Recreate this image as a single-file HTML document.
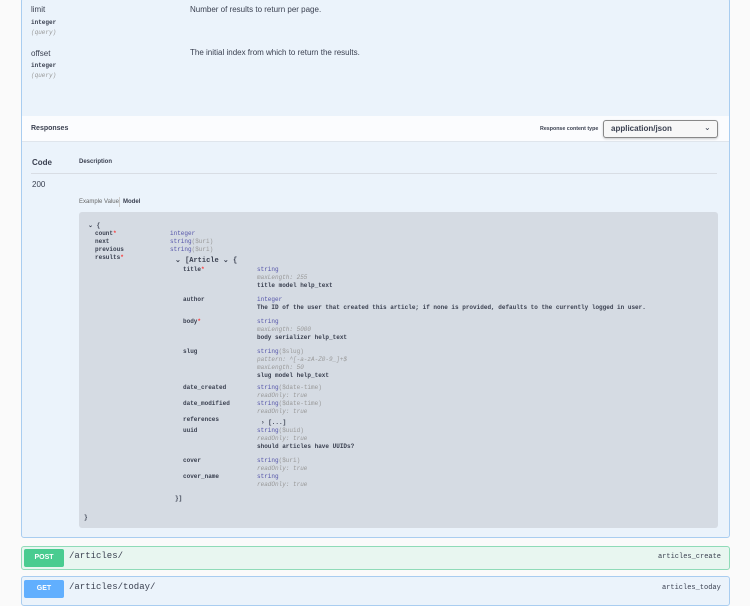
<!DOCTYPE html>
<html><head><meta charset="utf-8"><style>
*{margin:0;padding:0;box-sizing:border-box}
body{width:750px;height:600px;background:#fafafa;position:relative;overflow:hidden;font-family:"Liberation Sans",sans-serif;color:#3b4151}
.a{position:absolute;white-space:nowrap}
.m{font-family:"Liberation Mono",monospace;font-size:6px;line-height:8px;font-weight:bold;color:#3b4151}
.t{color:#55a;font-weight:normal}
.g{color:#999;font-style:italic;font-weight:normal}
.r{color:#f93e3e}
</style></head><body>
<div class="a" style="left:21px;top:-2px;width:709px;height:540px;background:#ebf3fb;border:1px solid #a9cdf0;border-radius:3px"></div>
<div class="a" style="left:31px;top:5px;font-size:8px">limit</div>
<div class="a m" style="left:31px;top:19px">integer</div>
<div class="a m g" style="left:31px;top:29px">(query)</div>
<div class="a" style="left:31px;top:49px;font-size:8px">offset</div>
<div class="a m" style="left:31px;top:62px">integer</div>
<div class="a m g" style="left:31px;top:72px">(query)</div>
<div class="a" style="left:190px;top:5px;font-size:8px">Number of results to return per page.</div>
<div class="a" style="left:190px;top:48px;font-size:8px">The initial index from which to return the results.</div>
<div class="a" style="left:22px;top:116px;width:707px;height:26px;background:#fbfcfe;border-bottom:1px solid #dfe5ec"></div>
<div class="a" style="left:31px;top:125px;font-size:7px;font-weight:bold">Responses</div>
<div class="a" style="left:540px;top:126px;font-size:5.3px;font-weight:bold">Response content type</div>
<div class="a" style="left:603px;top:120px;width:115px;height:18px;border:1px solid #888;border-radius:3px;background:#f7f7f7;box-shadow:0 1px 2px rgba(0,0,0,.2)"></div>
<div class="a" style="left:611px;top:124px;font-size:8px;font-weight:bold">application/json</div>
<div class="a" style="left:704px;top:123px;font-size:8px">⌄</div>
<div class="a" style="left:32px;top:158px;font-size:8px;font-weight:bold">Code</div>
<div class="a" style="left:79px;top:159px;font-size:6px;font-weight:bold">Description</div>
<div class="a" style="left:31px;top:173px;width:686px;height:1px;background:#d8dde4"></div>
<div class="a" style="left:32px;top:180px;font-size:8px">200</div>
<div class="a" style="left:79px;top:199px;font-size:6px;color:#666">Example Value</div>
<div class="a" style="left:119px;top:197px;width:1px;height:10px;background:#ccc"></div>
<div class="a" style="left:123px;top:199px;font-size:6px;font-weight:bold">Model</div>
<div class="a" style="left:79px;top:212px;width:639px;height:316px;background:#d5dbe3;border-radius:3px"></div>
<div class="a m" style="left:88px;top:222px">⌄ {</div>
<div class="a m" style="left:95px;top:230px">count<span class="r">*</span><br>next<br>previous<br>results<span class="r">*</span></div>
<div class="a m t" style="left:170px;top:230px">integer<br>string<span class="g" style="font-style:normal">($uri)</span><br>string<span class="g" style="font-style:normal">($uri)</span></div>
<div class="a m" style="left:175px;top:257px;font-size:7px">⌄ [Article ⌄ {</div>
<div class="a m" style="left:183px;top:266px">title<span class="r">*</span></div>
<div class="a m" style="left:257px;top:266px"><span class="t">string</span><br><span class="g">maxLength: 255</span><br>title model help_text</div>
<div class="a m" style="left:183px;top:296px">author</div>
<div class="a m" style="left:257px;top:296px"><span class="t">integer</span><br>The ID of the user that created this article; if none is provided, defaults to the currently logged in user.</div>
<div class="a m" style="left:183px;top:318px">body<span class="r">*</span></div>
<div class="a m" style="left:257px;top:318px"><span class="t">string</span><br><span class="g">maxLength: 5000</span><br>body serializer help_text</div>
<div class="a m" style="left:183px;top:348px">slug</div>
<div class="a m" style="left:257px;top:348px"><span class="t">string</span><span class="g" style="font-style:normal">($slug)</span><br><span class="g">pattern: ^[-a-zA-Z0-9_]+$</span><br><span class="g">maxLength: 50</span><br>slug model help_text</div>
<div class="a m" style="left:183px;top:384px">date_created</div>
<div class="a m" style="left:257px;top:384px"><span class="t">string</span><span class="g" style="font-style:normal">($date-time)</span><br><span class="g">readOnly: true</span></div>
<div class="a m" style="left:183px;top:400px">date_modified</div>
<div class="a m" style="left:257px;top:400px"><span class="t">string</span><span class="g" style="font-style:normal">($date-time)</span><br><span class="g">readOnly: true</span></div>
<div class="a m" style="left:183px;top:416px">references</div>
<div class="a m" style="left:261px;top:419px">› [...]</div>
<div class="a m" style="left:183px;top:427px">uuid</div>
<div class="a m" style="left:257px;top:427px"><span class="t">string</span><span class="g" style="font-style:normal">($uuid)</span><br><span class="g">readOnly: true</span><br>should articles have UUIDs?</div>
<div class="a m" style="left:183px;top:457px">cover</div>
<div class="a m" style="left:257px;top:457px"><span class="t">string</span><span class="g" style="font-style:normal">($uri)</span><br><span class="g">readOnly: true</span></div>
<div class="a m" style="left:183px;top:473px">cover_name</div>
<div class="a m" style="left:257px;top:473px"><span class="t">string</span><br><span class="g">readOnly: true</span></div>
<div class="a m" style="left:175px;top:495px">}]</div>
<div class="a m" style="left:84px;top:514px">}</div>
<div class="a" style="left:21px;top:546px;width:709px;height:24px;background:#e8f6f0;border:1px solid #8fdbb8;border-radius:3px"></div>
<div class="a" style="left:24px;top:549px;width:40px;height:18px;background:#49cc90;border-radius:2px;color:#fff;font-size:7px;font-weight:bold;text-align:center;line-height:18px">POST</div>
<div class="a" style="left:69px;top:551px;font-family:'Liberation Mono',monospace;font-size:9px">/articles/</div>
<div class="a" style="left:658px;top:553px;font-family:'Liberation Mono',monospace;font-size:7px">articles_create</div>
<div class="a" style="left:21px;top:576px;width:709px;height:30px;background:#ebf3fb;border:1px solid #a9cdf0;border-radius:3px"></div>
<div class="a" style="left:24px;top:580px;width:40px;height:18px;background:#61affe;border-radius:2px;color:#fff;font-size:7px;font-weight:bold;text-align:center;line-height:18px">GET</div>
<div class="a" style="left:69px;top:582px;font-family:'Liberation Mono',monospace;font-size:9px">/articles/today/</div>
<div class="a" style="left:662px;top:584px;font-family:'Liberation Mono',monospace;font-size:7px">articles_today</div>
</body></html>
